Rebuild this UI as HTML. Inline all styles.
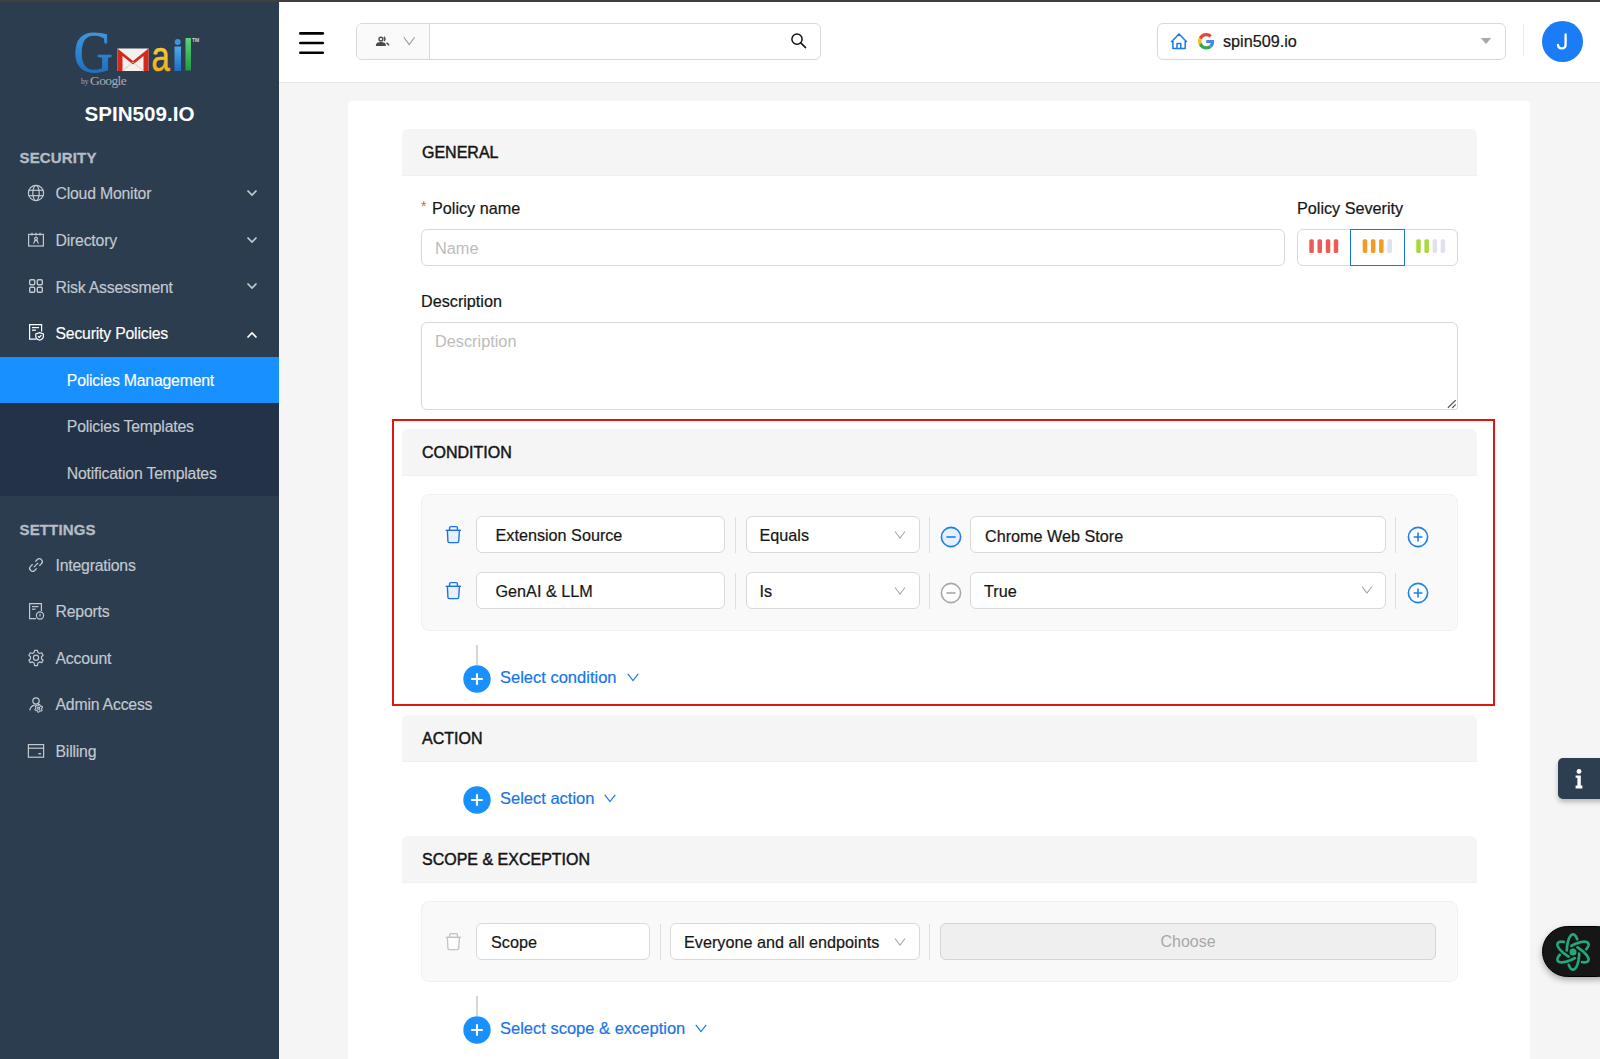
<!DOCTYPE html>
<html><head><meta charset="utf-8">
<style>
*{box-sizing:border-box;margin:0;padding:0}
html,body{width:1600px;height:1059px;overflow:hidden;background:#f5f5f5;font-family:"Liberation Sans",sans-serif;color:#1f1f1f}
.abs{position:absolute}
#topline{position:absolute;left:0;top:0;width:1600px;height:1.5px;background:#404040;z-index:50}
#sb{position:absolute;left:0;top:0;width:279px;height:1059px;background:#2c3d50}
#sub{position:absolute;left:0;top:357px;width:279px;height:139px;background:#233246}
#hl{position:absolute;left:0;top:357px;width:279px;height:46px;background:#1890ff}
.sbh{position:absolute;left:19.5px;font-size:15px;font-weight:700;color:#b4bcc6;letter-spacing:0.15px;-webkit-text-stroke:0.3px #b4bcc6}
.mi{position:absolute;left:55.5px;font-size:15.8px;letter-spacing:-0.2px;color:#c3c9d0;-webkit-text-stroke:0.15px currentColor;line-height:18px;white-space:nowrap;margin-top:0.4px}
.smi{position:absolute;left:66.8px;font-size:15.8px;letter-spacing:-0.2px;color:#c3c9d0;-webkit-text-stroke:0.15px currentColor;line-height:18px;white-space:nowrap;margin-top:0.4px}
.ico{position:absolute}
#hdr{position:absolute;left:279px;top:0;width:1321px;height:82.6px;background:#fff;border-bottom:1px solid #e6e6e6}
#card{position:absolute;left:348.3px;top:101.2px;width:1181.7px;height:1000px;background:#fff;border-radius:4px}
.sech{position:absolute;left:402px;width:1075px;height:46.5px;background:#f5f5f5;border-radius:6px 6px 0 0;border-bottom:1px solid #f0f0f0}
.sech span{position:absolute;left:20px;top:15px;font-size:16px;font-weight:400;-webkit-text-stroke:0.45px #141414;color:#141414;line-height:18px}
.lbl{position:absolute;margin-top:-0.3px;font-size:16.2px;color:#161616;-webkit-text-stroke:0.2px #161616;line-height:18px;white-space:nowrap}
.inp{position:absolute;background:#fff;border:1px solid #d9d9d9;border-radius:6px}
.ph{position:absolute;font-size:16.3px;color:#bcbcbc;line-height:18px;white-space:nowrap}
.cbox{position:absolute;left:421px;width:1037px;background:#f9f9f9;border:1px solid #f0f0f0;border-radius:8px}
.txt{position:absolute;margin-top:-0.5px;font-size:16.2px;color:#161616;-webkit-text-stroke:0.2px #161616;line-height:18px;white-space:nowrap}
.vdiv{position:absolute;width:1px;height:36px;background:#dedede}
.blue{color:#1774ec;-webkit-text-stroke:0.2px #1774ec;font-size:16.5px}
</style></head><body>
<div id="topline"></div>
<!-- SIDEBAR -->
<div id="sb"></div>
<div id="sub"></div>
<div id="hl"></div>

<!-- logo -->
<svg class="abs" style="left:70px;top:28px" width="135" height="62" viewBox="0 0 135 62">
  <defs>
    <linearGradient id="gG" x1="0" y1="0" x2="0" y2="1"><stop offset="0" stop-color="#4aa3e6"/><stop offset="1" stop-color="#1565b8"/></linearGradient>
    <linearGradient id="gA" x1="0" y1="0" x2="0" y2="1"><stop offset="0" stop-color="#ffd84a"/><stop offset="1" stop-color="#e7a812"/></linearGradient>
    <linearGradient id="gI" x1="0" y1="0" x2="0" y2="1"><stop offset="0" stop-color="#52a8ea"/><stop offset="1" stop-color="#1a6ec4"/></linearGradient>
    <linearGradient id="gL" x1="0" y1="0" x2="0" y2="1"><stop offset="0" stop-color="#5fd07a"/><stop offset="1" stop-color="#1f9c3f"/></linearGradient>
  </defs>
  <text x="0" y="44" font-family="Liberation Serif" font-size="59" fill="url(#gG)" stroke="url(#gG)" stroke-width="0.8" transform="translate(3.6 0) scale(0.925 1)">G</text>
  <rect x="47.5" y="20.5" width="31" height="22.5" fill="#f4f1ec"/>
  <path d="M47.5 20.5 L63 33 L78.5 20.5 L78.5 43 L73.5 43 L73.5 28 L63 36.5 L52.5 28 L52.5 43 L47.5 43 Z" fill="#d42a1e"/>
  <path d="M52.5 43 L63 34 L73.5 43" fill="none" stroke="#c8c2bb" stroke-width="0.8"/>
  <text x="0" y="43" font-family="Liberation Sans" font-size="42" fill="url(#gA)" stroke="url(#gA)" stroke-width="0.6" transform="translate(81.5 0) scale(0.78 1)">a</text>
  <circle cx="107.7" cy="14" r="3" fill="#3d95e0"/>
  <rect x="104.5" y="18.5" width="6.5" height="24.5" fill="url(#gI)"/>
  <rect x="115.5" y="10" width="5.5" height="32.5" fill="url(#gL)"/>
  <text x="122" y="14" font-family="Liberation Sans" font-weight="700" font-size="5" fill="#d0d4da">TM</text>
  <text x="11" y="56" font-family="Liberation Serif" font-size="7.5" fill="#a4acb6">by</text>
  <text x="20" y="57" font-family="Liberation Serif" font-size="13.5" fill="#a4acb6" style="letter-spacing:-0.6px">Google</text>
</svg>
<div class="abs" style="left:0;top:102px;width:279px;text-align:center;font-size:20.6px;font-weight:700;color:#fff;line-height:24px">SPIN509.IO</div>
<div class="sbh" style="top:149px;line-height:18px">SECURITY</div>
<div class="sbh" style="top:521px;line-height:18px">SETTINGS</div>

<div class="mi" style="top:185px">Cloud Monitor</div>
<div class="mi" style="top:231.7px">Directory</div>
<div class="mi" style="top:278.2px">Risk Assessment</div>
<div class="mi" style="top:324.8px;color:#fff">Security Policies</div>
<div class="smi" style="top:371.3px;color:#fff">Policies Management</div>
<div class="smi" style="top:417.8px">Policies Templates</div>
<div class="smi" style="top:464.3px">Notification Templates</div>
<div class="mi" style="top:556.6px">Integrations</div>
<div class="mi" style="top:602.8px">Reports</div>
<div class="mi" style="top:649.2px">Account</div>
<div class="mi" style="top:695.5px">Admin Access</div>
<div class="mi" style="top:742.7px">Billing</div>

<!-- chevrons -->
<svg class="abs" style="left:246px;top:188px" width="12" height="10"><path d="M1.5 2.5 L6 7 L10.5 2.5" fill="none" stroke="#c3c9d0" stroke-width="1.7"/></svg>
<svg class="abs" style="left:246px;top:234.6px" width="12" height="10"><path d="M1.5 2.5 L6 7 L10.5 2.5" fill="none" stroke="#c3c9d0" stroke-width="1.7"/></svg>
<svg class="abs" style="left:246px;top:281.2px" width="12" height="10"><path d="M1.5 2.5 L6 7 L10.5 2.5" fill="none" stroke="#c3c9d0" stroke-width="1.7"/></svg>
<svg class="abs" style="left:246px;top:329.5px" width="12" height="10"><path d="M1.5 7.5 L6 3 L10.5 7.5" fill="none" stroke="#fff" stroke-width="1.7"/></svg>

<!-- icons -->
<svg class="abs" style="left:27px;top:183.7px" width="18" height="18" viewBox="0 0 18 18" fill="none" stroke="#c3c9d0" stroke-width="1.2">
  <circle cx="9" cy="9" r="7.6"/><ellipse cx="9" cy="9" rx="3.2" ry="7.6"/><line x1="1.6" y1="6.3" x2="16.4" y2="6.3"/><line x1="1.6" y1="11.7" x2="16.4" y2="11.7"/>
</svg>
<svg class="abs" style="left:27px;top:231px" width="18" height="18" viewBox="0 0 18 18" fill="none" stroke="#c3c9d0" stroke-width="1.2">
  <rect x="1.6" y="3.4" width="14.8" height="11.6"/><line x1="5" y1="1.8" x2="5" y2="4.6"/><line x1="9" y1="1.8" x2="9" y2="4.6"/><line x1="13" y1="1.8" x2="13" y2="4.6"/>
  <circle cx="9" cy="7.6" r="1.4"/><path d="M6.6 12.6 L7.8 9.6 H10.2 L11.4 12.6"/>
</svg>
<svg class="abs" style="left:27px;top:276.6px" width="18" height="18" viewBox="0 0 18 18" fill="none" stroke="#c3c9d0" stroke-width="1.4">
  <rect x="2.7" y="2.7" width="5" height="5" rx="1"/><rect x="10.3" y="2.7" width="5" height="5" rx="1"/><rect x="2.7" y="10.3" width="5" height="5" rx="1"/><rect x="10.3" y="10.3" width="5" height="5" rx="1"/>
</svg>
<svg class="abs" style="left:27px;top:322.8px" width="18" height="18" viewBox="0 0 18 18" fill="none" stroke="#fff" stroke-width="1.2">
  <path d="M9.5 16.2 H2.6 V1.6 H14.6 V8.5"/><line x1="5" y1="4.6" x2="12" y2="4.6"/><line x1="5" y1="7.2" x2="9" y2="7.2"/>
  <path d="M12.6 9.6 L16.4 11 V13.6 Q16.4 16 12.6 17.2 Q8.8 16 8.8 13.6 V11 Z"/><path d="M11 13.3 L12.3 14.5 L14.4 12.2"/>
</svg>
<svg class="abs" style="left:27px;top:556px" width="18" height="18" viewBox="0 0 18 18" fill="none" stroke="#c3c9d0" stroke-width="1.3">
  <path d="M6.9 11.1 L11.1 6.9"/><path d="M8.25 5.65 L10.35 3.55 A2.9 2.9 0 0 1 14.45 7.65 L12.35 9.75"/><path d="M9.75 12.35 L7.65 14.45 A2.9 2.9 0 0 1 3.55 10.35 L5.65 8.25"/>
</svg>
<svg class="abs" style="left:27px;top:602px" width="18" height="18" viewBox="0 0 18 18" fill="none" stroke="#c3c9d0" stroke-width="1.2">
  <path d="M9 16.6 H2.6 V1.6 H14.4 V9"/><line x1="5" y1="4.6" x2="11.5" y2="4.6"/><line x1="5" y1="7.2" x2="8.5" y2="7.2"/>
  <circle cx="13" cy="13.5" r="3.6"/><line x1="13" y1="11.8" x2="13" y2="14.6"/>
</svg>
<svg class="abs" style="left:27px;top:649px" width="18" height="18" viewBox="0 0 18 18" fill="none" stroke="#c3c9d0" stroke-width="1.2">
  <path d="M7.6 1.4 H10.4 L10.9 3.5 L12.6 4.5 L14.7 3.8 L16.1 6.2 L14.5 7.7 V9.7 L16.1 11.2 L14.7 13.6 L12.6 12.9 L10.9 13.9 L10.4 16.6 H7.6 L7.1 13.9 L5.4 12.9 L3.3 13.6 L1.9 11.2 L3.5 9.7 V7.7 L1.9 6.2 L3.3 3.8 L5.4 4.5 L7.1 3.5 Z" stroke-linejoin="round"/>
  <circle cx="9" cy="8.8" r="2.6"/>
</svg>
<svg class="abs" style="left:27px;top:695.5px" width="18" height="18" viewBox="0 0 18 18" fill="none" stroke="#c3c9d0" stroke-width="1.2" stroke-linejoin="round">
  <circle cx="9" cy="5" r="3.2"/><path d="M2.8 14.4 Q3.6 9.8 7.8 9.2"/>
  <path d="M11.70 8.40 L12.71 8.53 L13.15 9.79 L13.75 10.25 L15.08 10.35 L15.47 11.29 L14.60 12.30 L14.50 13.05 L15.08 14.25 L14.46 15.06 L13.15 14.81 L12.45 15.10 L11.70 16.20 L10.69 16.07 L10.25 14.81 L9.65 14.35 L8.32 14.25 L7.93 13.31 L8.80 12.30 L8.90 11.55 L8.32 10.35 L8.94 9.54 L10.25 9.79 L10.95 9.50 Z" stroke-width="1.1"/><circle cx="11.7" cy="12.3" r="1.1"/>
</svg>
<svg class="abs" style="left:27px;top:742px" width="18" height="18" viewBox="0 0 18 18" fill="none" stroke="#c3c9d0" stroke-width="1.2">
  <rect x="1.4" y="2.6" width="15.2" height="12.6"/><line x1="1.4" y1="6.2" x2="16.6" y2="6.2"/><rect x="11.4" y="11" width="2.6" height="1.4" fill="#c3c9d0" stroke="none"/>
</svg>

<!-- HEADER -->
<div id="hdr"></div>
<svg class="abs" style="left:296px;top:28px" width="32" height="30"><g stroke="#000" stroke-width="2.6" stroke-linecap="round"><line x1="4.3" y1="5.4" x2="26.8" y2="5.4"/><line x1="4.3" y1="15" x2="26.8" y2="15"/><line x1="4.3" y1="24.7" x2="26.8" y2="24.7"/></g></svg>
<div class="abs" style="left:356px;top:23px;width:465px;height:37px;border:1px solid #d9d9d9;border-radius:6px;background:#fff;overflow:hidden">
  <div class="abs" style="left:0;top:0;width:73px;height:35px;background:#fafafa;border-right:1px solid #d9d9d9"></div>
</div>
<svg class="abs" style="left:374px;top:34px" width="18" height="14" viewBox="0 0 18 14" fill="none" stroke="#4a4a4a" stroke-width="1.4">
  <circle cx="6.9" cy="5.1" r="1.9"/><path d="M2.6 11.2 Q2.8 8.7 6.9 8.7 Q11 8.7 11.2 11.2 Z" fill="#4a4a4a"/><path d="M9.9 2.8 Q12 4.6 10.2 7" stroke-width="1.3"/><path d="M12.4 9 Q14.6 9.6 14.8 11.4" stroke-width="1.5"/>
</svg>
<svg class="abs" style="left:402px;top:35px" width="14" height="11"><path d="M1.8 2.2 L7.2 9.6 L12.6 2.2" fill="none" stroke="#999" stroke-width="1.1"/></svg>
<svg class="abs" style="left:788px;top:31px" width="22" height="22" viewBox="0 0 22 22" fill="none" stroke="#111" stroke-width="1.5">
  <circle cx="9" cy="8.2" r="5.1"/><line x1="12.7" y1="11.9" x2="17.6" y2="16.6" stroke-linecap="round"/>
</svg>

<div class="abs" style="left:1157px;top:23px;width:349px;height:37px;border:1px solid #d9d9d9;border-radius:6px;background:#fff"></div>
<svg class="abs" style="left:1169px;top:32px" width="20" height="19" viewBox="0 0 20 19" fill="none" stroke="#1a7ae8" stroke-width="1.5" stroke-linejoin="round">
  <path d="M2.2 9.9 L10 1.9 L17.8 9.9 M3.9 8.2 V16.6 H16.2 V8.2 M8 16.6 V11.4 H11.8 V16.6"/>
</svg>
<svg class="abs" style="left:1197.5px;top:33px" width="16.5" height="16.5" viewBox="0 0 48 48">
  <path fill="#EA4335" d="M24 9.5c3.54 0 6.71 1.22 9.21 3.6l6.85-6.85C35.9 2.38 30.47 0 24 0 14.62 0 6.51 5.38 2.56 13.22l7.98 6.19C12.43 13.72 17.74 9.5 24 9.5z"/>
  <path fill="#4285F4" d="M46.98 24.55c0-1.57-.15-3.09-.38-4.55H24v9.02h12.94c-.58 2.96-2.26 5.48-4.78 7.18l7.73 6c4.51-4.18 7.09-10.36 7.09-17.65z"/>
  <path fill="#FBBC05" d="M10.53 28.59c-.48-1.45-.76-2.99-.76-4.59s.27-3.14.76-4.59l-7.98-6.19C.92 16.46 0 20.12 0 24c0 3.88.92 7.54 2.56 10.78l7.97-6.19z"/>
  <path fill="#34A853" d="M24 48c6.48 0 11.93-2.13 15.89-5.81l-7.73-6c-2.15 1.45-4.92 2.3-8.16 2.3-6.26 0-11.57-4.22-13.47-9.91l-7.98 6.19C6.51 42.62 14.62 48 24 48z"/>
</svg>
<div class="txt" style="left:1223px;top:32.5px">spin509.io</div>
<svg class="abs" style="left:1479px;top:36px" width="14" height="10"><path d="M1.8 2 H12.2 L7 8 Z" fill="#a8a8a8"/></svg>
<div class="abs" style="left:1523px;top:24px;width:1px;height:32px;background:#ececec"></div>
<div class="abs" style="left:1542px;top:21px;width:40.5px;height:40.5px;border-radius:50%;background:#1a7cf7"></div>
<svg class="abs" style="left:1550px;top:28px" width="24" height="26"><path d="M15.6 6.4 V16.4 Q15.6 20.4 11.6 20.4 Q8.2 20.4 8 17" fill="none" stroke="#fff" stroke-width="2.3" stroke-linecap="round"/></svg>

<!-- CARD -->
<div id="card"></div>

<div class="sech" style="top:129px"><span>GENERAL</span></div>
<div class="sech" style="top:429px"><span>CONDITION</span></div>
<div class="sech" style="top:715px"><span>ACTION</span></div>
<div class="sech" style="top:836px"><span>SCOPE &amp; EXCEPTION</span></div>


<!-- GENERAL content -->
<div class="abs" style="left:421px;top:199px;color:#ff4d4f;font-size:14px;line-height:14px">*</div>
<div class="lbl" style="left:432px;top:199px">Policy name</div>
<div class="inp" style="left:421px;top:229px;width:864px;height:37px"></div>
<div class="ph" style="left:435px;top:239px">Name</div>
<div class="lbl" style="left:1297px;top:199px">Policy Severity</div>
<div class="inp" style="left:1297px;top:229px;width:161px;height:37px"></div>
<div class="abs" style="left:1350px;top:229px;width:55px;height:37px;border:1.5px solid #1b74e4"></div>
<svg class="abs" style="left:1297px;top:229px" width="161" height="37"><rect x="12.3" y="10.2" width="4.5" height="13.8" rx="1.6" fill="#ee5a55"/><rect x="20.5" y="10.2" width="4.5" height="13.8" rx="1.6" fill="#ee5a55"/><rect x="28.8" y="10.2" width="4.5" height="13.8" rx="1.6" fill="#ee5a55"/><rect x="36.75" y="10.2" width="4.5" height="13.8" rx="1.6" fill="#ee5a55"/><rect x="65.7" y="10.2" width="4.5" height="13.8" rx="1.6" fill="#f59a23"/><rect x="73.9" y="10.2" width="4.5" height="13.8" rx="1.6" fill="#f59a23"/><rect x="82.1" y="10.2" width="4.5" height="13.8" rx="1.6" fill="#f59a23"/><rect x="90.4" y="10.2" width="4.5" height="13.8" rx="1.6" fill="#dfe1ef"/><rect x="119.25" y="10.2" width="4.5" height="13.8" rx="1.6" fill="#a6d93b"/><rect x="127.4" y="10.2" width="4.5" height="13.8" rx="1.6" fill="#a6d93b"/><rect x="135.6" y="10.2" width="4.5" height="13.8" rx="1.6" fill="#dfe1ef"/><rect x="143.7" y="10.2" width="4.5" height="13.8" rx="1.6" fill="#dfe1ef"/></svg>
<div class="lbl" style="left:421px;top:292px">Description</div>
<div class="inp" style="left:421px;top:322px;width:1037px;height:88px;border-radius:6px 6px 3px 6px"></div>
<div class="ph" style="left:435px;top:332px">Description</div>
<svg class="abs" style="left:1444px;top:396px" width="14" height="14"><path d="M3.9 11.8 L11.7 4.2 M8.3 12 L11.7 8.4" stroke="#5a5a5a" stroke-width="1.2"/></svg>

<!-- red box -->
<div class="abs" style="left:392px;top:419px;width:1103px;height:287px;border:2.8px solid #dd1611;z-index:5"></div>

<!-- CONDITION content -->
<div class="cbox" style="top:494px;height:137px"></div>
<svg class="abs" style="left:444px;top:524px" width="18" height="20" viewBox="0 0 18 20" fill="none" stroke="#1b70e2" stroke-width="1.35" stroke-linejoin="round"><path d="M3.4 6.4 L3.9 17.2 Q4 18.6 5.4 18.6 H13.2 Q14.6 18.6 14.7 17.2 L15.4 6.4 Z" fill="#e6f1fd"/><path d="M1.6 6.3 H17 M5.6 6.3 V3.6 Q5.6 2.6 6.8 2.6 H12.2 Q13.4 2.6 13.4 3.6 V6.3"/></svg>
<div class="inp" style="left:476px;top:516px;width:249px;height:37px"></div>
<div class="txt" style="left:495.5px;top:526px">Extension Source</div>
<div class="vdiv" style="left:735px;top:516.5px"></div>
<div class="inp" style="left:745.5px;top:516px;width:174px;height:37px"></div>
<div class="txt" style="left:759.5px;top:526px">Equals</div>
<svg class="abs" style="left:893px;top:530px" width="14" height="10"><path d="M2 1.5 L7 8 L12 1.5" fill="none" stroke="#a8a8a8" stroke-width="1.1"/></svg>
<div class="vdiv" style="left:929px;top:516.5px"></div>
<svg class="abs" style="left:940px;top:526px" width="22" height="22" viewBox="0 0 22 22"><circle cx="11" cy="11" r="9.6" fill="#e6f1fd" stroke="#1a7ff0" stroke-width="1.6"/><path d="M6.4 11 H15.6" stroke="#1a7ff0" stroke-width="1.6"/></svg>
<div class="inp" style="left:970px;top:516px;width:416px;height:37px"></div>
<div class="txt" style="left:985px;top:527px">Chrome Web Store</div>
<div class="vdiv" style="left:1395px;top:516.5px"></div>
<svg class="abs" style="left:1406.5px;top:525.7px" width="22" height="22" viewBox="0 0 22 22"><circle cx="11" cy="11" r="9.6" fill="#fff" stroke="#1a7ff0" stroke-width="1.6"/><path d="M6.6 11 H15.4 M11 6.6 V15.4" stroke="#1a7ff0" stroke-width="1.6"/></svg>

<svg class="abs" style="left:444px;top:580px" width="18" height="20" viewBox="0 0 18 20" fill="none" stroke="#1b70e2" stroke-width="1.35" stroke-linejoin="round"><path d="M3.4 6.4 L3.9 17.2 Q4 18.6 5.4 18.6 H13.2 Q14.6 18.6 14.7 17.2 L15.4 6.4 Z" fill="#e6f1fd"/><path d="M1.6 6.3 H17 M5.6 6.3 V3.6 Q5.6 2.6 6.8 2.6 H12.2 Q13.4 2.6 13.4 3.6 V6.3"/></svg>
<div class="inp" style="left:476px;top:572px;width:249px;height:37px"></div>
<div class="txt" style="left:495.5px;top:582px">GenAI &amp; LLM</div>
<div class="vdiv" style="left:735px;top:572.5px"></div>
<div class="inp" style="left:745.5px;top:572px;width:174px;height:37px"></div>
<div class="txt" style="left:759.5px;top:582px">Is</div>
<svg class="abs" style="left:893px;top:586px" width="14" height="10"><path d="M2 1.5 L7 8 L12 1.5" fill="none" stroke="#a8a8a8" stroke-width="1.1"/></svg>
<div class="vdiv" style="left:929px;top:572.5px"></div>
<svg class="abs" style="left:940px;top:581.5px" width="22" height="22" viewBox="0 0 22 22"><circle cx="11" cy="11" r="9.6" fill="#fff" stroke="#a8a8a8" stroke-width="1.6"/><path d="M6.4 11 H15.6" stroke="#a8a8a8" stroke-width="1.6"/></svg>
<div class="inp" style="left:970px;top:572px;width:416px;height:37px"></div>
<div class="txt" style="left:984px;top:582px">True</div>
<svg class="abs" style="left:1359.5px;top:585px" width="14" height="10"><path d="M2 1.5 L7 8 L12 1.5" fill="none" stroke="#a8a8a8" stroke-width="1.1"/></svg>
<div class="vdiv" style="left:1395px;top:572.5px"></div>
<svg class="abs" style="left:1406.5px;top:581.5px" width="22" height="22" viewBox="0 0 22 22"><circle cx="11" cy="11" r="9.6" fill="#fff" stroke="#1a7ff0" stroke-width="1.6"/><path d="M6.6 11 H15.4 M11 6.6 V15.4" stroke="#1a7ff0" stroke-width="1.6"/></svg>

<div class="abs" style="left:476px;top:645px;width:2px;height:20px;background:#d6d6d6"></div>
<svg class="abs" style="left:463px;top:665px" width="28" height="28" viewBox="0 0 28 28"><circle cx="14" cy="14" r="13.7" fill="#1890ff"/><path d="M14 8.2 V19.8 M8.2 14 H19.8" stroke="#fff" stroke-width="2.1"/></svg>
<div class="txt blue" style="left:500px;top:668.5px">Select condition</div>
<svg class="abs" style="left:626px;top:672px" width="14" height="10"><path d="M1.8 1.8 L7 8.6 L12.2 1.8" fill="none" stroke="#1a76e6" stroke-width="1.2"/></svg>

<!-- ACTION content -->
<svg class="abs" style="left:463px;top:786px" width="28" height="28" viewBox="0 0 28 28"><circle cx="14" cy="14" r="13.7" fill="#1890ff"/><path d="M14 8.2 V19.8 M8.2 14 H19.8" stroke="#fff" stroke-width="2.1"/></svg>
<div class="txt blue" style="left:500px;top:789.5px">Select action</div>
<svg class="abs" style="left:603px;top:793px" width="14" height="10"><path d="M1.8 1.8 L7 8.6 L12.2 1.8" fill="none" stroke="#1a76e6" stroke-width="1.2"/></svg>

<!-- SCOPE content -->
<div class="cbox" style="top:901px;height:81px"></div>
<svg class="abs" style="left:444px;top:931px" width="18" height="20" viewBox="0 0 18 20" fill="none" stroke="#c4c4c4" stroke-width="1.35" stroke-linejoin="round"><path d="M3.4 6.4 L3.9 17.2 Q4 18.6 5.4 18.6 H13.2 Q14.6 18.6 14.7 17.2 L15.4 6.4 Z" fill="#fff"/><path d="M1.6 6.3 H17 M5.6 6.3 V3.6 Q5.6 2.6 6.8 2.6 H12.2 Q13.4 2.6 13.4 3.6 V6.3"/></svg>
<div class="inp" style="left:476px;top:923px;width:174px;height:37px"></div>
<div class="txt" style="left:491px;top:933px">Scope</div>
<div class="vdiv" style="left:659.5px;top:923.5px"></div>
<div class="inp" style="left:669.5px;top:923px;width:250px;height:37px"></div>
<div class="txt" style="left:684px;top:933px">Everyone and all endpoints</div>
<svg class="abs" style="left:893px;top:937px" width="14" height="10"><path d="M2 1.5 L7 8 L12 1.5" fill="none" stroke="#a8a8a8" stroke-width="1.1"/></svg>
<div class="vdiv" style="left:929px;top:923.5px"></div>
<div class="abs" style="left:940px;top:923px;width:496px;height:37px;background:#efefef;border:1px solid #d4d4d4;border-radius:6px;text-align:center;font-size:16px;line-height:35px;color:#a8a8a8">Choose</div>

<div class="abs" style="left:476px;top:996px;width:2px;height:20px;background:#d6d6d6"></div>
<svg class="abs" style="left:463px;top:1016px" width="28" height="28" viewBox="0 0 28 28"><circle cx="14" cy="14" r="13.7" fill="#1890ff"/><path d="M14 8.2 V19.8 M8.2 14 H19.8" stroke="#fff" stroke-width="2.1"/></svg>
<div class="txt blue" style="left:500px;top:1019.5px">Select scope &amp; exception</div>
<svg class="abs" style="left:694px;top:1023px" width="14" height="10"><path d="M1.8 1.8 L7 8.6 L12.2 1.8" fill="none" stroke="#1a76e6" stroke-width="1.2"/></svg>

<!-- floating buttons -->
<div class="abs" style="left:1558px;top:758px;width:50px;height:41px;background:#2c3e50;border-radius:5px;box-shadow:0 3px 5px rgba(0,0,0,0.25)"></div>
<svg class="abs" style="left:1570px;top:766px" width="18" height="24" viewBox="0 0 18 24"><circle cx="9" cy="5.5" r="2.4" fill="#fff"/><path d="M5.6 9.6 H10.8 V19.6 H12.4 V22.4 H5.6 V19.6 H7.4 V11.8 H5.6 Z" fill="#fff"/></svg>
<div class="abs" style="left:1542px;top:925.5px;width:80px;height:51.5px;background:#161616;border:1px solid #000;border-radius:26px;box-shadow:0 3px 6px rgba(0,0,0,0.3)"></div>
<svg class="abs" style="left:1553px;top:932px" width="40" height="40" viewBox="0 0 40 40" fill="none" stroke="#22a87a" stroke-width="2.7" stroke-linecap="round" stroke-linejoin="round"><path d="M13.82 18.47 L13.86 17.49 L13.92 16.52 L14.00 15.56 L14.10 14.62 L14.21 13.69 L14.34 12.79 L14.50 11.90 L14.66 11.04 L14.85 10.21 L15.05 9.41 L15.26 8.64 L15.50 7.91 L15.74 7.21 L16.00 6.56 L16.27 5.94 L16.55 5.37 L16.84 4.85 L17.15 4.37 L17.46 3.95 L17.78 3.57 L18.10 3.24 L18.44 2.97 L18.77 2.75 L19.12 2.58 L19.46 2.47 L19.81 2.41 L20.15 2.41 L20.50 2.46 L20.84 2.56 L21.18 2.72 L21.52 2.94 L21.85 3.21 L22.18 3.53 L22.50 3.90 L22.81 4.32 L23.12 4.79 L23.41 5.31 L23.70 5.87 L23.97 6.48 L24.23 7.13"/><path d="M26.18 21.53 L26.14 22.51 L26.08 23.48 L26.00 24.44 L25.90 25.38 L25.79 26.31 L25.66 27.21 L25.50 28.10 L25.34 28.96 L25.15 29.79 L24.95 30.59 L24.74 31.36 L24.50 32.09 L24.26 32.79 L24.00 33.44 L23.73 34.06 L23.45 34.63 L23.16 35.15 L22.85 35.63 L22.54 36.05 L22.22 36.43 L21.90 36.76 L21.56 37.03 L21.23 37.25 L20.88 37.42 L20.54 37.53 L20.19 37.59 L19.85 37.59 L19.50 37.54 L19.16 37.44 L18.82 37.28 L18.48 37.06 L18.15 36.79 L17.82 36.47 L17.50 36.10 L17.19 35.68 L16.88 35.21 L16.59 34.69 L16.30 34.13 L16.03 33.52 L15.77 32.87"/><path d="M21.76 26.12 L20.89 26.57 L20.03 27.00 L19.16 27.41 L18.29 27.80 L17.43 28.17 L16.58 28.50 L15.74 28.82 L14.91 29.10 L14.10 29.36 L13.30 29.58 L12.53 29.78 L11.78 29.95 L11.06 30.08 L10.36 30.19 L9.69 30.26 L9.06 30.30 L8.46 30.31 L7.89 30.28 L7.37 30.23 L6.88 30.14 L6.44 30.02 L6.03 29.87 L5.67 29.69 L5.36 29.48 L5.09 29.23 L4.86 28.96 L4.69 28.67 L4.56 28.34 L4.48 27.99 L4.45 27.61 L4.46 27.21 L4.53 26.79 L4.64 26.35 L4.80 25.88 L5.01 25.40 L5.27 24.90 L5.57 24.39 L5.92 23.86 L6.31 23.32 L6.74 22.77"/><path d="M18.24 13.88 L19.11 13.43 L19.97 13.00 L20.84 12.59 L21.71 12.20 L22.57 11.83 L23.42 11.50 L24.26 11.18 L25.09 10.90 L25.90 10.64 L26.70 10.42 L27.47 10.22 L28.22 10.05 L28.94 9.92 L29.64 9.81 L30.31 9.74 L30.94 9.70 L31.54 9.69 L32.11 9.72 L32.63 9.77 L33.12 9.86 L33.56 9.98 L33.97 10.13 L34.33 10.31 L34.64 10.52 L34.91 10.77 L35.14 11.04 L35.31 11.33 L35.44 11.66 L35.52 12.01 L35.55 12.39 L35.54 12.79 L35.47 13.21 L35.36 13.65 L35.20 14.12 L34.99 14.60 L34.73 15.10 L34.43 15.61 L34.08 16.14 L33.69 16.68 L33.26 17.23"/><path d="M15.58 24.58 L14.76 24.06 L13.95 23.52 L13.16 22.98 L12.39 22.42 L11.64 21.86 L10.92 21.29 L10.23 20.72 L9.57 20.14 L8.94 19.57 L8.35 18.99 L7.79 18.42 L7.27 17.85 L6.80 17.30 L6.36 16.74 L5.96 16.20 L5.61 15.67 L5.30 15.16 L5.04 14.66 L4.83 14.17 L4.66 13.71 L4.54 13.26 L4.47 12.84 L4.45 12.43 L4.47 12.06 L4.55 11.70 L4.67 11.37 L4.84 11.07 L5.06 10.80 L5.32 10.55 L5.63 10.34 L5.98 10.15 L6.38 10.00 L6.82 9.87 L7.31 9.78 L7.83 9.72 L8.39 9.69 L8.98 9.70 L9.61 9.73 L10.27 9.80 L10.97 9.90"/><path d="M24.42 15.42 L25.24 15.94 L26.05 16.48 L26.84 17.02 L27.61 17.58 L28.36 18.14 L29.08 18.71 L29.77 19.28 L30.43 19.86 L31.06 20.43 L31.65 21.01 L32.21 21.58 L32.73 22.15 L33.20 22.70 L33.64 23.26 L34.04 23.80 L34.39 24.33 L34.70 24.84 L34.96 25.34 L35.17 25.83 L35.34 26.29 L35.46 26.74 L35.53 27.16 L35.55 27.57 L35.53 27.94 L35.45 28.30 L35.33 28.63 L35.16 28.93 L34.94 29.20 L34.68 29.45 L34.37 29.66 L34.02 29.85 L33.62 30.00 L33.18 30.13 L32.69 30.22 L32.17 30.28 L31.61 30.31 L31.02 30.30 L30.39 30.27 L29.73 30.20 L29.03 30.10"/><circle cx="20" cy="20" r="3.5" fill="#22a87a" stroke="none"/></svg>

</body></html>
